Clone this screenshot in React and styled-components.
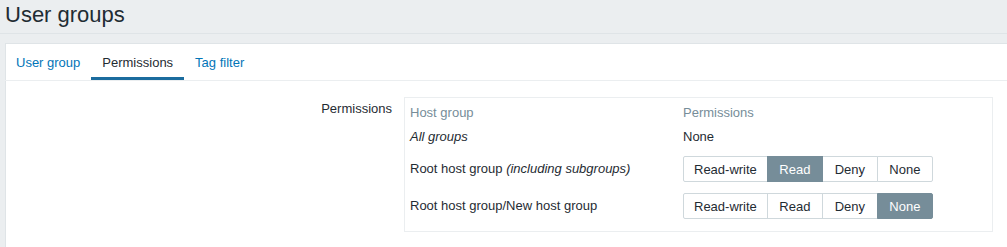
import React from "react";
import styled, { createGlobalStyle } from "styled-components";

const GlobalStyle = createGlobalStyle`
  html, body { margin: 0; padding: 0; }
  body {
    background: #ebeef0;
    font-family: "Liberation Sans", Arial, sans-serif;
    font-size: 13px;
    color: #1f2c33;
  }
`;

const Page = styled.div`
  padding: 0 0 0 5px;
`;

const Header = styled.header`
  height: 34px;
  border-bottom: 1px solid #dfe4e7;
  box-sizing: border-box;
  padding-top: 2px;
  margin-left: -5px;
  padding-left: 5px;
`;

const Title = styled.h1`
  margin: 0;
  font-size: 22px;
  line-height: 25px;
  font-weight: normal;
  color: #1f2c33;
`;

const Panel = styled.section`
  margin-top: 9px;
  background: #ffffff;
  border: 1px solid #dfe4e7;
  border-right: none;
  border-bottom: none;
  min-height: 220px;
`;

const TabList = styled.nav`
  display: flex;
  height: 36px;
  margin-left: -1px;
  border-bottom: 1px solid #ebeef0;
  box-sizing: content-box;
`;

const Tab = styled.a`
  display: flex;
  align-items: center;
  padding: 3px 11px 0;
  height: 36px;
  box-sizing: border-box;
  border-bottom: 3px solid ${(p) => (p.$active ? "#1b6c9e" : "transparent")};
  color: ${(p) => (p.$active ? "#1f2c33" : "#0275b8")};
  text-decoration: none;
  cursor: pointer;
`;

const Form = styled.div`
  padding-top: 16px;
  display: grid;
  grid-template-columns: 386px 589px;
  column-gap: 12px;
`;

const Label = styled.div`
  text-align: right;
  line-height: 14px;
  padding-top: 5px;
`;

const PermTable = styled.div`
  border: 1px solid #ebeef0;
  padding: 6px 5px 12px;
  display: grid;
  grid-template-columns: 273px 1fr;
  align-items: center;
`;

const HeadCell = styled.div`
  color: #768d99;
  line-height: 18px;
`;

const Cell = styled.div`
  line-height: 18px;
  margin-top: ${(p) => p.$top || 0}px;
  font-style: ${(p) => (p.$italic ? "italic" : "normal")};
`;

const Em = styled.em`
  font-style: italic;
`;

const RadioGroup = styled.div`
  display: flex;
  margin-top: ${(p) => p.$top || 0}px;
`;

const RadioButton = styled.button`
  height: 26px;
  min-width: 56px;
  padding: 0 10px;
  margin: 0 0 0 -1px;
  font-family: inherit;
  font-size: 13px;
  border: 1px solid ${(p) => (p.$checked ? "#768d99" : "#cfd8dc")};
  background: ${(p) => (p.$checked ? "#768d99" : "#ffffff")};
  color: ${(p) => (p.$checked ? "#ffffff" : "#1f2c33")};
  position: relative;
  z-index: ${(p) => (p.$checked ? 1 : 0)};
  cursor: pointer;
  &:first-child {
    margin-left: 0;
    border-radius: 2px 0 0 2px;
  }
  &:last-child {
    border-radius: 0 2px 2px 0;
  }
`;

const OPTIONS = ["Read-write", "Read", "Deny", "None"];

function Radio({ value, top }) {
  return (
    <RadioGroup $top={top}>
      {OPTIONS.map((o) => (
        <RadioButton key={o} $checked={o === value} type="button">
          {o}
        </RadioButton>
      ))}
    </RadioGroup>
  );
}

export default function App() {
  return (
    <>
      <GlobalStyle />
      <Page>
        <Header>
          <Title>User groups</Title>
        </Header>
        <Panel>
          <TabList>
            <Tab>User group</Tab>
            <Tab $active>Permissions</Tab>
            <Tab>Tag filter</Tab>
          </TabList>
          <Form>
            <Label>Permissions</Label>
            <PermTable>
              <HeadCell>Host group</HeadCell>
              <HeadCell>Permissions</HeadCell>
              <Cell $top={6} $italic>All groups</Cell>
              <Cell $top={6}>None</Cell>
              <Cell $top={10}>
                Root host group <Em>(including subgroups)</Em>
              </Cell>
              <Radio value="Read" top={10} />
              <Cell $top={11}>Root host group/New host group</Cell>
              <Radio value="None" top={11} />
            </PermTable>
          </Form>
        </Panel>
      </Page>
    </>
  );
}
